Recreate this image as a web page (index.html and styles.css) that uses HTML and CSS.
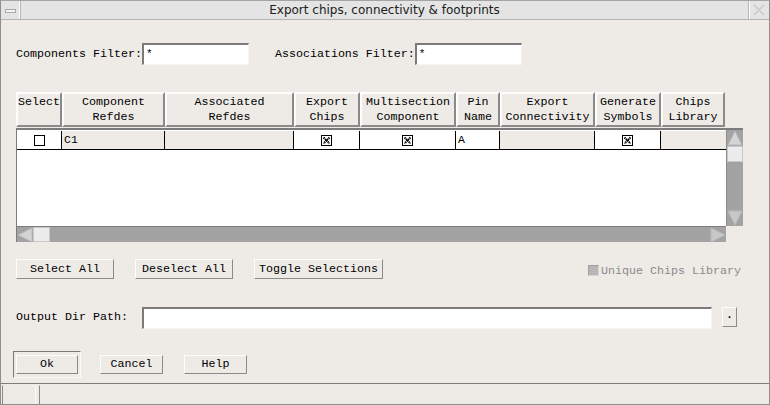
FILE: index.html
```html
<!DOCTYPE html>
<html>
<head>
<meta charset="utf-8">
<link rel="stylesheet" href="styles.css">
</head>
<body>
<div class="win">
  <div class="titlebar">
    <div class="tb-btn tb-left"><span class="minus"></span></div>
    <div class="title">Export chips, connectivity &amp; footprints</div>
    <div class="tb-btn tb-right">
      <svg width="14" height="12" viewBox="0 0 14 12"><path d="M2 1 L5 4 M9 4 L12 1 M2 11 L5 8 M9 8 L12 11 M5 4 L9 8 M9 4 L5 8" stroke="#c4c4c4" stroke-width="1.2" fill="none"/></svg>
    </div>
  </div>
  <div class="content">
    <div class="filters">
      <span class="lbl">Components Filter:</span><span class="field f-short">*</span>
      <span class="lbl lbl-assoc">Associations Filter:</span><span class="field f-short">*</span>
    </div>

    <div class="headers">
      <div class="hd w-sel">Select</div>
      <div class="hd w-comp">Component<br>Refdes</div>
      <div class="hd w-assoc">Associated<br>Refdes</div>
      <div class="hd w-exp">Export<br>Chips</div>
      <div class="hd w-multi">Multisection<br>Component</div>
      <div class="hd w-pin">Pin<br>Name</div>
      <div class="hd w-conn">Export<br>Connectivity</div>
      <div class="hd w-gen">Generate<br>Symbols</div>
      <div class="hd w-lib">Chips<br>Library</div>
    </div>

    <div class="table">
      <div class="data">
        <div class="row">
          <div class="cell white c-sel center"><span class="cb"></span></div>
          <div class="cell grey c-comp">C1</div>
          <div class="cell grey c-assoc"></div>
          <div class="cell white c-exp center"><span class="cb checked"><svg width="9" height="9" viewBox="0 0 9 9"><path d="M1.5 1.5 L7.5 7.5 M7.5 1.5 L1.5 7.5" stroke="#000" stroke-width="2" stroke-dasharray="1.4 0.6"/></svg></span></div>
          <div class="cell white c-multi center"><span class="cb checked"><svg width="9" height="9" viewBox="0 0 9 9"><path d="M1.5 1.5 L7.5 7.5 M7.5 1.5 L1.5 7.5" stroke="#000" stroke-width="2" stroke-dasharray="1.4 0.6"/></svg></span></div>
          <div class="cell white c-pin">A</div>
          <div class="cell grey c-conn"></div>
          <div class="cell white c-gen center"><span class="cb checked"><svg width="9" height="9" viewBox="0 0 9 9"><path d="M1.5 1.5 L7.5 7.5 M7.5 1.5 L1.5 7.5" stroke="#000" stroke-width="2" stroke-dasharray="1.4 0.6"/></svg></span></div>
          <div class="cell grey c-lib"></div>
        </div>
      </div>
      <div class="vscroll">
        <div class="arrow"><svg width="16" height="16" viewBox="0 0 16 16"><polygon points="8,1 15,15 1,15" fill="#d4d4d4" stroke="#b8b8b8"/></svg></div>
        <div class="vthumb"></div>
        <div class="vtrack"></div>
        <div class="arrow"><svg width="16" height="16" viewBox="0 0 16 16"><polygon points="1,1 15,1 8,15" fill="#c8c8c8" stroke="#b8b8b8"/></svg></div>
      </div>
      <div class="hscroll">
        <div class="arrow"><svg width="16" height="16" viewBox="0 0 16 16"><polygon points="15,1 15,15 1,8" fill="#d4d4d4" stroke="#b8b8b8"/></svg></div>
        <div class="hthumb"></div>
        <div class="htrack"></div>
        <div class="arrow"><svg width="16" height="16" viewBox="0 0 16 16"><polygon points="1,1 15,8 1,15" fill="#c8c8c8" stroke="#b8b8b8"/></svg></div>
      </div>
      <div class="corner"></div>
    </div>

    <div class="actions">
      <div class="btn b-sel">Select All</div>
      <div class="btn b-desel">Deselect All</div>
      <div class="btn b-toggle">Toggle Selections</div>
      <div class="unique"><span class="ucb"></span>Unique Chips Library</div>
    </div>

    <div class="outrow">
      <span class="lbl">Output Dir Path:</span>
      <span class="field f-long"></span>
      <div class="btn b-dot">.</div>
    </div>

    <div class="okrow">
      <div class="defframe"><div class="btn b-ok">Ok</div></div>
      <div class="btn b-cancel">Cancel</div>
      <div class="btn b-help">Help</div>
    </div>
  </div>
  <div class="status">
    <div class="st st1"></div>
    <div class="st st2"></div>
  </div>
</div>
</body>
</html>
```

FILE: styles.css
```css
html, body { margin: 0; padding: 0; background: #eeebe7; }
.win {
  width: 770px; height: 405px; box-sizing: border-box;
  border: 1px solid #8e8e8e; border-top-color: #a4a4a4;
  background: #eeebe7; display: flex; flex-direction: column;
  font-family: "Liberation Mono", "Courier New", monospace;
  font-size: 11.67px; color: #000;
}
.titlebar {
  height: 18px; display: flex; align-items: stretch;
  background: #e4e4e4; border-bottom: 1px solid #b4b4b4;
}
.tb-btn { width: 19px; display: flex; align-items: center; justify-content: center; }
.tb-left { border-right: 1px solid #b8b8b8; box-shadow: inset -1px 0 0 #fafafa; }
.tb-right { width: 20px; border-left: 1px solid #b8b8b8; box-shadow: inset 1px 0 0 #fafafa; }
.minus { width: 9px; height: 2px; border: 1px solid #a8a8a8; background: #f4f4f4; margin-top: 2px; }
.title {
  flex: 1; text-align: center; font-family: "DejaVu Sans", sans-serif;
  font-size: 12px; line-height: 18px; color: #202020;
}
.content { padding-left: 15px; display: flex; flex-direction: column; }
.filters { margin-top: 23px; height: 22px; display: flex; align-items: center; }
.lbl { white-space: pre; }
.lbl-assoc { margin-left: 26px; }
.field {
  box-sizing: border-box; height: 22px; background: #fff;
  border-top: 2px solid #7a7a7a; border-left: 2px solid #7a7a7a;
  border-right: 1px solid #f4f4f4; border-bottom: 1px solid #f4f4f4;
  padding-left: 2px; line-height: 19px; font-size: 11px;
}
.f-short { width: 107px; }
.f-long { width: 570px; margin-left: 13px; }

.headers { margin-top: 27px; display: flex; height: 35px; }
.hd {
  box-sizing: border-box; height: 35px; text-align: center; line-height: 15px;
  padding-top: 1px;
  border-top: 2px solid #fdfdfd; border-left: 2px solid #fdfdfd;
  border-right: 2px solid #8a8a8a; border-bottom: 2px solid #8a8a8a;
  background: #eeebe7; white-space: nowrap; overflow: hidden;
}
.w-sel { width: 46px; } .w-comp { width: 103px; } .w-assoc { width: 129px; }
.w-exp { width: 66px; } .w-multi { width: 96px; } .w-pin { width: 44px; }
.w-conn { width: 95px; } .w-gen { width: 66px; } .w-lib { width: 64px; }

.table {
  margin-top: 1px; width: 727px; box-sizing: border-box;
  border-top: 2px solid #7c7c7c; border-left: 1px solid #7c7c7c;
  display: grid; grid-template-columns: 709px 17px; grid-template-rows: 96px 16px;
}
.data { background: #fff; padding-top: 1px; }
.row { display: flex; height: 19px; border-bottom: 1px solid #000; box-sizing: border-box; }
.cell {
  box-sizing: border-box; border-right: 1px solid #000; height: 18px;
  line-height: 18px; padding-left: 2px; font-size: 11.5px;
}
.cell.white { background: #fff; }
.cell.grey { background: #eeebe7; }
.center { display: flex; align-items: center; justify-content: center; padding-left: 0; }
.c-sel { width: 45px; } .c-comp { width: 103px; } .c-assoc { width: 129px; }
.c-exp { width: 66px; } .c-multi { width: 96px; } .c-pin { width: 44px; }
.c-conn { width: 95px; } .c-gen { width: 66px; } .c-lib { width: 65px; border-right: none; }
.cb {
  width: 11px; height: 11px; box-sizing: border-box; border: 1px solid #000;
  background: #fff; display: flex; align-items: center; justify-content: center;
}
.cb svg { display: block; }

.vscroll { background: #a3a3a3; display: flex; flex-direction: column; border-left: 1px solid #8c8c8c; }
.vthumb { height: 16px; background: #ececec; border: 1px solid #c8c8c8; box-sizing: border-box; }
.vtrack { flex: 1; }
.hscroll { background: #a3a3a3; display: flex; border-top: 1px solid #7c7c7c; }
.hthumb { width: 17px; background: #ececec; border: 1px solid #c8c8c8; box-sizing: border-box; }
.htrack { flex: 1; }
.arrow { width: 16px; height: 16px; flex: none; }
.arrow svg { display: block; }
.corner { background: #eeebe7; }

.actions { margin-top: 17px; height: 20px; display: flex; align-items: center; }
.btn {
  box-sizing: border-box; height: 20px; background: #eeebe7; text-align: center;
  line-height: 18px; border-top: 1px solid #fdfdfd; border-left: 1px solid #fdfdfd;
  border-right: 1px solid #8a8a8a; border-bottom: 1px solid #8a8a8a; white-space: pre;
}
.b-sel { width: 98px; }
.b-desel { width: 98px; margin-left: 21px; }
.b-toggle { width: 129px; margin-left: 21px; }
.unique {
  margin-left: auto; margin-right: 28px; color: #8a8a8a; display: flex; align-items: center;
  padding-top: 3px;
}
.ucb { width: 11px; height: 11px; background: #b6b6b6; border: 1px solid #a0a0a0; border-right-color: #d6d6d6; border-bottom-color: #d6d6d6; box-sizing: border-box; margin-right: 2px; }

.outrow { margin-top: 28px; height: 22px; display: flex; align-items: flex-start; }
.outrow .lbl { line-height: 20px; width: 113px; }
.b-dot { width: 15px; margin-left: 10px; line-height: 14px; font-weight: bold; }

.okrow { margin-top: 22px; height: 27px; display: flex; align-items: center; margin-left: -3px; }
.defframe {
  box-sizing: border-box; width: 68px; height: 27px; padding: 3px 2px 3px 2px;
  border-top: 1px solid #7a7a7a; border-left: 1px solid #7a7a7a;
  border-right: 1px solid #fafafa; border-bottom: 1px solid #fafafa;
}
.b-ok { width: 62px; height: 19px; line-height: 17px; }
.b-cancel { width: 63px; height: 19px; line-height: 17px; margin-left: 19px; }
.b-help { width: 63px; height: 19px; line-height: 17px; margin-left: 21px; }

.status {
  margin-top: auto; height: 21px; display: flex; border-top: 1px solid #7c7c7c;
  box-sizing: border-box; padding: 1px 0 0 1px; gap: 3px;
}
.st { border-left: 1px solid #8a8a8a; border-top: 1px solid #eeebe7; box-sizing: border-box; }
.st1 { width: 34px; border-right: 1px solid #fafafa; }
.st2 { flex: 1; border-left: 1px solid #8a8a8a; }
```
